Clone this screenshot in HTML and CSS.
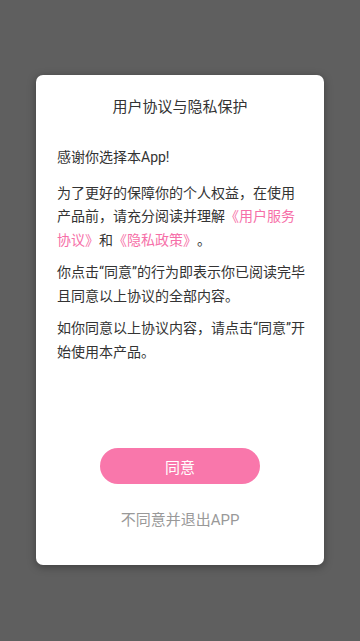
FILE: index.html
```html
<!DOCTYPE html>
<html lang="zh">
<head>
<meta charset="utf-8">
<link rel="stylesheet" href="styles.css">
</head>
<body>
<div class="overlay">
  <div class="dialog">
    <h1 class="title">用户协议与隐私保护</h1>
    <div class="content">
      <p class="first">感谢你选择本App!</p>
      <p><span>为了更好的保障你的个人权益，在使用</span><span>产品前，请充分阅读并理解</span><span class="link">《用户服务</span><span class="link">协议》</span>和<span class="link">《隐私政策》</span>。</p>
      <p>你点击“同意”的行为即表示你已阅读完毕且同意以上协议的全部内容。</p>
      <p>如你同意以上协议内容，请点击“同意”开始使用本产品。</p>
    </div>
    <div class="actions">
      <button class="agree">同意</button>
      <div class="decline">不同意并退出APP</div>
    </div>
  </div>
</div>
</body>
</html>
```
FILE: styles.css
```css
html, body {
  margin: 0;
  padding: 0;
  height: 100%;
}
body {
  background: #5f5f5f;
  font-family: Roboto, "Noto Sans CJK SC", sans-serif;
}
.overlay {
  height: 641px;
  display: flex;
  justify-content: center;
  padding-top: 75px;
  box-sizing: border-box;
}
.dialog {
  width: 288px;
  height: 490px;
  background: #fff;
  border-radius: 7px;
  box-shadow: 0 2px 8px rgba(0, 0, 0, 0.35);
  display: flex;
  flex-direction: column;
  box-sizing: border-box;
}
.title {
  margin: 0;
  padding-top: 21px;
  font-size: 15px;
  line-height: 22px;
  font-weight: normal;
  color: #333;
  text-align: center;
}
.content {
  flex: 1;
  padding: 28px 19px 0 21px;
  font-size: 14px;
  line-height: 23.5px;
  color: #333;
  text-spacing-trim: space-all;
}
.content p {
  margin: 0 0 9px;
}
.content p.first {
  margin-bottom: 12px;
}
.link {
  color: #f66fa8;
}
.actions {
  display: flex;
  flex-direction: column;
  align-items: center;
  padding-bottom: 35px;
}
.agree {
  width: 160px;
  height: 36px;
  border: none;
  border-radius: 18px;
  background: #f977ab;
  color: #fff;
  font-family: Roboto, "Noto Sans CJK SC", sans-serif;
  font-size: 15px;
  padding: 0;
}
.decline {
  margin-top: 26px;
  font-size: 15px;
  line-height: 20px;
  color: #999;
}
```
